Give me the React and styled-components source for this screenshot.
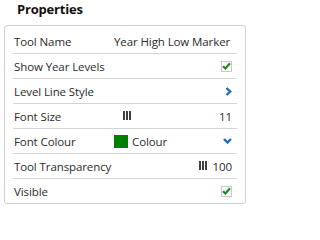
import React from "react";
import styled, { createGlobalStyle } from "styled-components";

const Global = createGlobalStyle`
  html, body { margin: 0; padding: 0; background: #fff; }
  body { font-family: "Open Sans", "Noto Sans", sans-serif; color: #2b2b2b; }
`;

const Page = styled.div`
  width: 251px;
  height: 208px;
  padding: 0 5px 0 4px;
  box-sizing: border-box;
`;

const Title = styled.h2`
  margin: 0;
  height: 25px;
  padding-left: 13px;
  font-size: 13px;
  letter-spacing: -0.2px;
  font-weight: 700;
  line-height: 18px;
  color: #111;
`;

const Panel = styled.div`
  border: 1px solid #cfcfcf;
  border-radius: 3px;
  padding: 3px 8px 0 8px;
  box-sizing: border-box;
  height: 179px;
`;

const Row = styled.div`
  display: grid;
  grid-template-columns: 101px 1fr;
  align-items: center;
  height: 25px;
  box-sizing: border-box;
  border-bottom: 1px solid #d4d4d4;
  &:last-child { border-bottom: none; height: 24px; }
`;

const Label = styled.div`
  padding-left: 1px;
  font-size: 11.5px;
  letter-spacing: -0.1px;
  white-space: nowrap;
`;

const Value = styled.div`
  display: flex;
  align-items: center;
  justify-content: ${(p) => (p.$end ? "flex-end" : "flex-start")};
  padding-right: 5px;
  font-size: 11.5px;
  letter-spacing: -0.1px;
  white-space: nowrap;
  min-width: 0;
`;

const Check = styled.span`
  width: 9px;
  height: 9px;
  border: 1px solid #c9c9c9;
  background: #fff;
  display: flex;
  align-items: center;
  justify-content: center;
`;

const Swatch = styled.span`
  width: 14px;
  height: 13px;
  background: ${(p) => p.$color};
  margin-right: 4px;
`;

const Grow = styled.span`
  flex: 1;
`;

const Track = styled.div`
  position: relative;
  flex: 1;
  height: 12px;
`;

const Grip = styled.span`
  position: absolute;
  top: 1px;
  width: 8px;
  height: 9px;
  background: repeating-linear-gradient(
    to right,
    #3f3f3f 0 2px,
    transparent 2px 3px
  );
`;

const Num = styled.span`
  width: 27px;
  text-align: right;
`;

const CheckMark = () => (
  <svg width="9" height="8" viewBox="0 0 9 8">
    <polyline points="1,4.2 3.4,6.5 8,1.2" fill="none" stroke="#1f8a1f" strokeWidth="2.2" />
  </svg>
);

const ChevronRight = () => (
  <svg width="7" height="9" viewBox="0 0 7 9">
    <polyline points="1.5,1 5.2,4.5 1.5,8" fill="none" stroke="#1d6fb8" strokeWidth="2.4" />
  </svg>
);

const ChevronDown = () => (
  <svg width="9" height="6" viewBox="0 0 9 6">
    <polyline points="1,1 4.5,4.5 8,1" fill="none" stroke="#1d6fb8" strokeWidth="2.4" />
  </svg>
);

const Slider = ({ value, min, max }) => {
  const pct = (value - min) / (max - min);
  return (
    <>
      <Track>
        <Grip style={{ left: `calc(${pct} * (100% - 6px))` }} />
      </Track>
      <Num>{value}</Num>
    </>
  );
};

export default function App() {
  return (
    <Page>
      <Global />
      <Title>Properties</Title>
      <Panel>
        <Row>
          <Label>Tool Name</Label>
          <Value>Year High Low Marker</Value>
        </Row>
        <Row>
          <Label>Show Year Levels</Label>
          <Value $end>
            <Check><CheckMark /></Check>
          </Value>
        </Row>
        <Row>
          <Label>Level Line Style</Label>
          <Value $end>
            <ChevronRight />
          </Value>
        </Row>
        <Row>
          <Label>Font Size</Label>
          <Value>
            <Slider value={11} min={1} max={100} />
          </Value>
        </Row>
        <Row>
          <Label>Font Colour</Label>
          <Value>
            <Swatch $color="#008000" />
            <span>Colour</span>
            <Grow />
            <ChevronDown />
          </Value>
        </Row>
        <Row>
          <Label>Tool Transparency</Label>
          <Value>
            <Slider value={100} min={0} max={100} />
          </Value>
        </Row>
        <Row>
          <Label>Visible</Label>
          <Value $end>
            <Check><CheckMark /></Check>
          </Value>
        </Row>
      </Panel>
    </Page>
  );
}
